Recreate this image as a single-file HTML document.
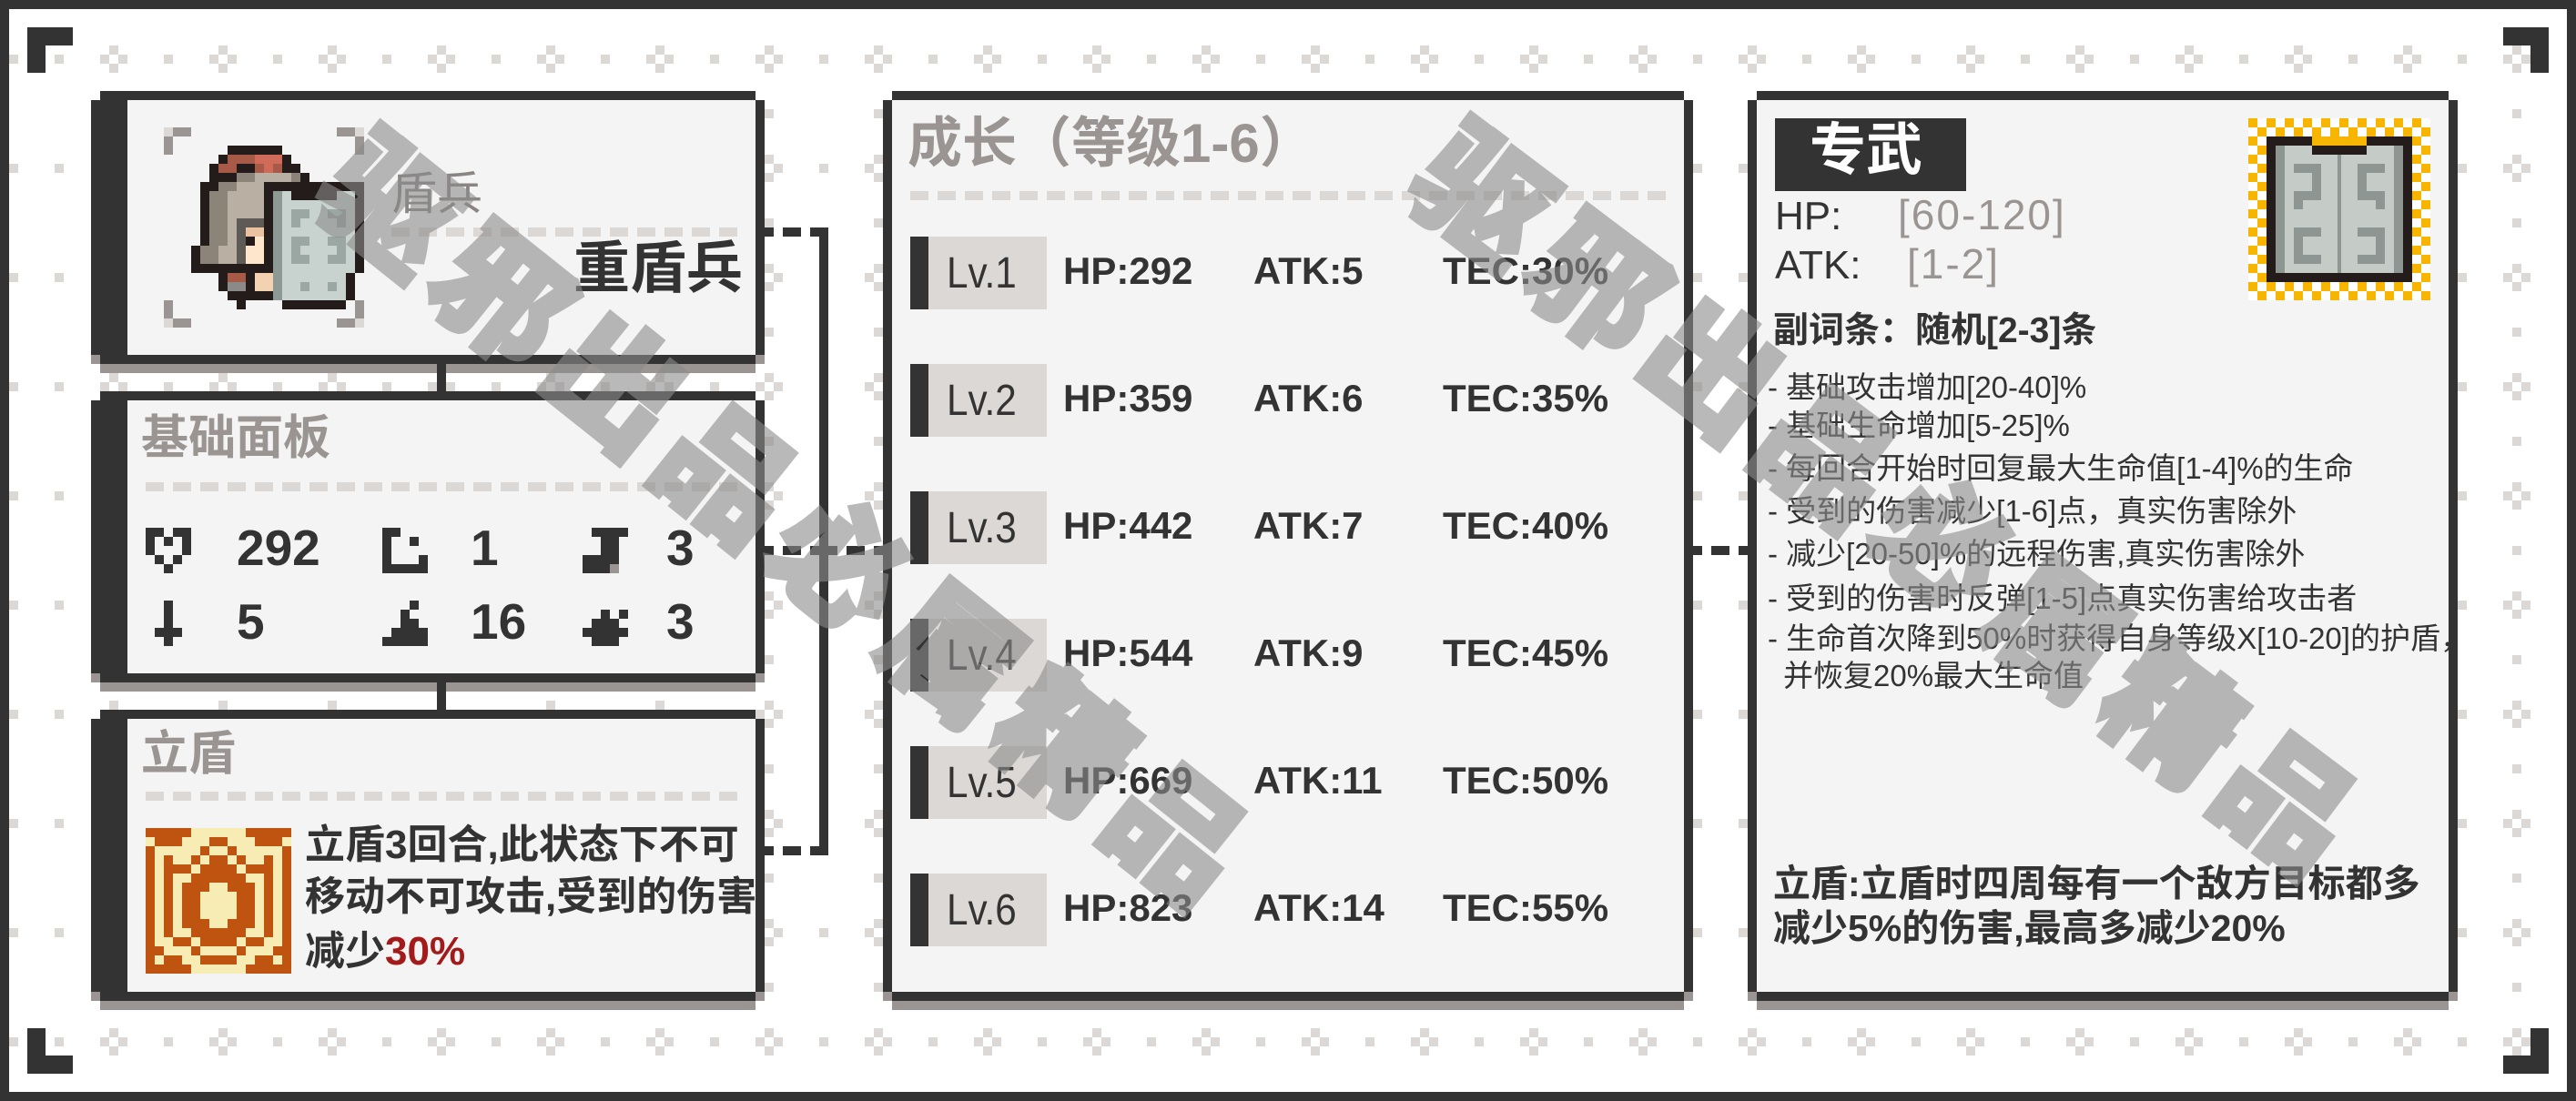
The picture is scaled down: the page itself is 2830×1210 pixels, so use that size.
<!DOCTYPE html>
<html><head><meta charset="utf-8">
<style>
html,body{margin:0;padding:0;background:#fff;}
body{width:2830px;height:1210px;position:relative;overflow:hidden;}
.t{position:absolute;line-height:1;white-space:nowrap;font-family:"Liberation Sans","Noto Sans CJK SC",sans-serif;color:#333;}
.b{font-weight:bold;}
.g{color:#9a9592;}
.wm{position:absolute;line-height:140px;height:140px;white-space:nowrap;font-family:"Noto Sans CJK SC",sans-serif;font-weight:900;font-size:144px;letter-spacing:14px;color:#8c8c8c;-webkit-text-stroke:5px #8c8c8c;opacity:0.6;transform-origin:0 70px;}
</style></head><body>
<svg width="2830" height="1210" style="position:absolute;left:0;top:0" xmlns="http://www.w3.org/2000/svg">
<defs>
<pattern id="dots" x="0" y="0" width="120" height="120" patternUnits="userSpaceOnUse">
<g fill="#dcd8d6">
<rect x="0" y="50" width="10" height="10"/><rect x="110" y="60" width="10" height="10"/><rect x="10" y="60" width="10" height="10"/><rect x="0" y="70" width="10" height="10"/>
<rect x="60" y="60" width="10" height="10"/><rect x="0" y="0" width="10" height="10"/>
</g>
</pattern>
<g id="half" fill="#bf5410">
<rect x="0" y="0" width="5" height="1"/>
<rect x="1" y="1" width="3" height="1"/><rect x="7" y="1" width="1" height="1"/>
<rect x="0" y="2" width="1" height="1"/><rect x="6" y="2" width="1" height="1"/>
<rect x="0" y="3" width="1" height="1"/><rect x="2" y="3" width="1" height="1"/><rect x="5" y="3" width="1" height="1"/><rect x="7" y="3" width="1" height="1"/>
<rect x="0" y="4" width="1" height="1"/><rect x="2" y="4" width="3" height="1"/><rect x="6" y="4" width="2" height="1"/>
<rect x="0" y="5" width="1" height="1"/><rect x="2" y="5" width="1" height="1"/><rect x="5" y="5" width="3" height="1"/>
<rect x="0" y="6" width="1" height="1"/><rect x="2" y="6" width="1" height="1"/><rect x="4" y="6" width="3" height="1"/>
<rect x="0" y="7" width="1" height="3"/><rect x="2" y="7" width="1" height="3"/><rect x="4" y="7" width="2" height="3"/>
<rect x="0" y="10" width="1" height="1"/><rect x="2" y="10" width="1" height="1"/><rect x="4" y="10" width="3" height="1"/>
<rect x="0" y="11" width="1" height="1"/><rect x="2" y="11" width="1" height="1"/><rect x="5" y="11" width="3" height="1"/>
<rect x="0" y="12" width="1" height="1"/><rect x="3" y="12" width="2" height="1"/><rect x="6" y="12" width="2" height="1"/>
<rect x="0" y="13" width="2" height="1"/><rect x="5" y="13" width="1" height="1"/>
<rect x="0" y="14" width="1" height="1"/><rect x="2" y="14" width="2" height="1"/><rect x="6" y="14" width="2" height="1"/>
<rect x="0" y="15" width="5" height="1"/>
</g>
</defs>
<rect x="0" y="0" width="2830" height="1210" fill="#fff"/>
<rect x="0" y="0" width="2830" height="1210" fill="url(#dots)"/>
<g fill="#333">
<rect x="0" y="0" width="2830" height="10"/><rect x="0" y="1200" width="2830" height="10"/>
<rect x="0" y="0" width="10" height="1210"/><rect x="2820" y="0" width="10" height="1210"/>
<rect x="30" y="30" width="50" height="20"/><rect x="30" y="30" width="20" height="50"/>
<rect x="2750" y="30" width="50" height="20"/><rect x="2780" y="30" width="20" height="50"/>
<rect x="30" y="1160" width="50" height="20"/><rect x="30" y="1130" width="20" height="50"/>
<rect x="2750" y="1160" width="50" height="20"/><rect x="2780" y="1130" width="20" height="50"/>
</g>
<g>
<rect x="140" y="110" width="690" height="280" fill="#f4f4f4"/>
<g fill="#333"><rect x="110" y="100" width="720" height="10"/><rect x="100" y="110" width="40" height="280"/><rect x="830" y="110" width="10" height="280"/><rect x="110" y="390" width="720" height="10"/></g>
<g fill="#9a9592"><rect x="100" y="390" width="10" height="10"/><rect x="830" y="390" width="10" height="10"/><rect x="110" y="400" width="720" height="10"/></g>
<rect x="140" y="440" width="690" height="300" fill="#f4f4f4"/>
<g fill="#333"><rect x="110" y="430" width="720" height="10"/><rect x="100" y="440" width="40" height="300"/><rect x="830" y="440" width="10" height="300"/><rect x="110" y="740" width="720" height="10"/></g>
<g fill="#9a9592"><rect x="100" y="740" width="10" height="10"/><rect x="830" y="740" width="10" height="10"/><rect x="110" y="750" width="720" height="10"/></g>
<rect x="140" y="790" width="690" height="300" fill="#f4f4f4"/>
<g fill="#333"><rect x="110" y="780" width="720" height="10"/><rect x="100" y="790" width="40" height="300"/><rect x="830" y="790" width="10" height="300"/><rect x="110" y="1090" width="720" height="10"/></g>
<g fill="#9a9592"><rect x="100" y="1090" width="10" height="10"/><rect x="830" y="1090" width="10" height="10"/><rect x="110" y="1100" width="720" height="10"/></g>
<rect x="980" y="110" width="870" height="980" fill="#f4f4f4"/>
<g fill="#333"><rect x="980" y="100" width="870" height="10"/><rect x="970" y="110" width="10" height="980"/><rect x="1850" y="110" width="10" height="980"/><rect x="980" y="1090" width="870" height="10"/></g>
<g fill="#9a9592"><rect x="970" y="1090" width="10" height="10"/><rect x="1850" y="1090" width="10" height="10"/><rect x="980" y="1100" width="870" height="10"/></g>
<rect x="1930" y="110" width="760" height="980" fill="#f4f4f4"/>
<g fill="#333"><rect x="1930" y="100" width="760" height="10"/><rect x="1920" y="110" width="10" height="980"/><rect x="2690" y="110" width="10" height="980"/><rect x="1930" y="1090" width="760" height="10"/></g>
<g fill="#9a9592"><rect x="1920" y="1090" width="10" height="10"/><rect x="2690" y="1090" width="10" height="10"/><rect x="1930" y="1100" width="760" height="10"/></g>
</g>
<g fill="#333">
<rect x="480" y="400" width="10" height="30"/><rect x="480" y="750" width="10" height="30"/>
<rect x="900" y="250" width="10" height="690"/>
<rect x="840" y="250" width="10" height="10"/><rect x="860" y="250" width="20" height="10"/><rect x="890" y="250" width="10" height="10"/>
<rect x="840" y="930" width="10" height="10"/><rect x="860" y="930" width="20" height="10"/><rect x="890" y="930" width="10" height="10"/>
<rect x="840" y="600" width="10" height="10"/><rect x="860" y="600" width="20" height="10"/><rect x="890" y="600" width="10" height="10"/>
<rect x="910" y="600" width="10" height="10"/><rect x="930" y="600" width="20" height="10"/><rect x="960" y="600" width="10" height="10"/>
<rect x="1860" y="600" width="10" height="10"/><rect x="1880" y="600" width="20" height="10"/><rect x="1910" y="600" width="10" height="10"/>
</g>
<g stroke="#dcd8d6" stroke-width="10" stroke-dasharray="20 10">
<line x1="430" y1="255" x2="815" y2="255"/>
<line x1="160" y1="535" x2="815" y2="535"/>
<line x1="160" y1="875" x2="815" y2="875"/>
<line x1="1000" y1="215" x2="1835" y2="215"/>
</g>
<g>
<rect x="1000" y="260" width="20" height="80" fill="#333"/><rect x="1020" y="260" width="130" height="80" fill="#dcd8d6"/>
<rect x="1000" y="400" width="20" height="80" fill="#333"/><rect x="1020" y="400" width="130" height="80" fill="#dcd8d6"/>
<rect x="1000" y="540" width="20" height="80" fill="#333"/><rect x="1020" y="540" width="130" height="80" fill="#dcd8d6"/>
<rect x="1000" y="680" width="20" height="80" fill="#333"/><rect x="1020" y="680" width="130" height="80" fill="#dcd8d6"/>
<rect x="1000" y="820" width="20" height="80" fill="#333"/><rect x="1020" y="820" width="130" height="80" fill="#dcd8d6"/>
<rect x="1000" y="960" width="20" height="80" fill="#333"/><rect x="1020" y="960" width="130" height="80" fill="#dcd8d6"/>
</g>
<g fill="#9a9592">
<rect x="190" y="140" width="20" height="10"/><rect x="180" y="150" width="10" height="20"/>
<rect x="370" y="140" width="20" height="10"/><rect x="390" y="150" width="10" height="20"/>
<rect x="180" y="330" width="10" height="20"/><rect x="190" y="350" width="20" height="10"/>
<rect x="390" y="330" width="10" height="20"/><rect x="370" y="350" width="20" height="10"/>
</g>
<g fill="#dcd8d6"><rect x="180" y="140" width="10" height="10"/><rect x="390" y="140" width="10" height="10"/><rect x="180" y="350" width="10" height="10"/><rect x="390" y="350" width="10" height="10"/></g>
<g transform="translate(170,130) scale(10)">
<g fill="#231c1a">
<rect x="8" y="3" width="6" height="1"/><rect x="7" y="4" width="8" height="1"/><rect x="6" y="5" width="10" height="1"/><rect x="6" y="6" width="11" height="1"/>
<rect x="5" y="7" width="8" height="1"/><rect x="5" y="8" width="8" height="6"/><rect x="4" y="14" width="9" height="3"/>
<rect x="7" y="17" width="7" height="2"/><rect x="8" y="19" width="6" height="1"/><rect x="9" y="20" width="1" height="1"/>
<rect x="12" y="7" width="11" height="10"/><rect x="12" y="17" width="10" height="3"/><rect x="14" y="20" width="7" height="1"/>
</g>
<g fill="#a85a48"><rect x="8" y="4" width="3" height="1"/><rect x="7" y="5" width="2" height="1"/><rect x="11" y="5" width="1" height="1"/><rect x="13" y="5" width="1" height="1"/><rect x="8" y="17" width="2" height="1"/></g>
<g fill="#cf6b58"><rect x="11" y="4" width="3" height="1"/><rect x="12" y="5" width="1" height="1"/></g>
<g fill="#8c8478"><rect x="9" y="6" width="2" height="1"/><rect x="15" y="6" width="1" height="1"/><rect x="7" y="7" width="2" height="1"/><rect x="6" y="8" width="2" height="6"/><rect x="5" y="14" width="2" height="2"/></g>
<g fill="#b9b0a3"><rect x="11" y="6" width="4" height="1"/><rect x="9" y="7" width="3" height="1"/><rect x="8" y="8" width="4" height="3"/><rect x="8" y="11" width="1" height="3"/><rect x="7" y="14" width="2" height="2"/></g>
<g fill="#5e5a56"><rect x="9" y="11" width="3" height="1"/><rect x="9" y="12" width="1" height="4"/></g>
<rect x="10" y="12" width="2" height="4" fill="#fde6cc"/><rect x="10" y="12" width="2" height="1" fill="#e9c29f"/>
<rect x="10" y="13" width="1" height="1" fill="#231c1a"/>
<rect x="8" y="18" width="2" height="1" fill="#8c8a88"/>
<rect x="11" y="17" width="2" height="2" fill="#f2d2b0"/>
<rect x="13" y="8" width="9" height="9" fill="#c8d2cf"/><rect x="13" y="17" width="8" height="3" fill="#c8d2cf"/>
<rect x="13" y="8" width="1" height="12" fill="#8c9995"/>
<rect x="15" y="8" width="5" height="1" fill="#231c1a"/>
<g fill="#9aa7a3">
<rect x="15" y="10" width="2" height="1"/><rect x="15" y="11" width="1" height="1"/><rect x="19" y="10" width="2" height="1"/><rect x="20" y="11" width="1" height="1"/>
<rect x="15" y="13" width="2" height="1"/><rect x="15" y="14" width="1" height="1"/><rect x="15" y="15" width="2" height="1"/>
<rect x="19" y="13" width="2" height="1"/><rect x="20" y="14" width="1" height="1"/><rect x="19" y="15" width="2" height="1"/>
<rect x="16" y="18" width="1" height="1"/><rect x="19" y="18" width="1" height="1"/>
</g>
</g>
<g fill="#333">
<g transform="translate(160,580) scale(10)">
<rect x="0" y="0" width="2" height="1"/><rect x="3" y="0" width="2" height="1"/>
<rect x="0" y="1" width="1" height="2"/><rect x="2" y="1" width="1" height="1"/><rect x="4" y="1" width="1" height="2"/>
<rect x="1" y="3" width="1" height="1"/><rect x="3" y="3" width="1" height="1"/><rect x="2" y="4" width="1" height="1"/>
</g>
<g transform="translate(420,580) scale(10)">
<rect x="0" y="0" width="2" height="1"/><rect x="0" y="1" width="1" height="3"/><rect x="3" y="1" width="1" height="1"/>
<rect x="4" y="3" width="1" height="1"/><rect x="0" y="4" width="5" height="1"/>
</g>
<g transform="translate(640,580) scale(10)">
<rect x="1" y="0" width="4" height="1"/><rect x="2" y="1" width="2" height="2"/><rect x="0" y="3" width="4" height="1"/><rect x="0" y="4" width="3" height="1"/>
<rect x="3" y="4" width="1" height="1" fill="#9a9592"/>
</g>
<g transform="translate(160,660) scale(10)">
<rect x="2" y="0" width="1" height="5"/><rect x="1" y="3" width="3" height="1"/>
</g>
<g transform="translate(420,660) scale(10)">
<rect x="3" y="0" width="1" height="1"/><rect x="2" y="1" width="1" height="1"/><rect x="2" y="2" width="2" height="1"/><rect x="1" y="3" width="4" height="1"/><rect x="0" y="4" width="5" height="1"/>
</g>
<g transform="translate(640,660) scale(10)">
<rect x="2" y="1" width="1" height="1"/><rect x="4" y="1" width="1" height="1"/><rect x="1" y="2" width="3" height="1"/><rect x="0" y="3" width="5" height="1"/><rect x="1" y="4" width="3" height="1"/>
</g>
</g>
<rect x="160" y="910" width="160" height="160" fill="#f7edb4"/>
<g transform="translate(160,910) scale(10)">
<use href="#half"/>
<use href="#half" transform="translate(16,0) scale(-1,1)"/>
</g>
<rect x="2470" y="130" width="200" height="200" fill="#fff"/>
<g fill="#f7b500" transform="translate(2470,130) scale(10)">
<rect x="0" y="0" width="1" height="1"/><rect x="2" y="0" width="1" height="1"/><rect x="4" y="0" width="1" height="1"/><rect x="6" y="0" width="1" height="1"/><rect x="8" y="0" width="1" height="1"/><rect x="10" y="0" width="1" height="1"/><rect x="12" y="0" width="1" height="1"/><rect x="14" y="0" width="1" height="1"/><rect x="16" y="0" width="1" height="1"/><rect x="18" y="0" width="1" height="1"/>
<rect x="1" y="1" width="1" height="1"/><rect x="3" y="1" width="1" height="1"/><rect x="5" y="1" width="1" height="1"/><rect x="7" y="1" width="1" height="1"/><rect x="9" y="1" width="1" height="1"/><rect x="11" y="1" width="1" height="1"/><rect x="13" y="1" width="1" height="1"/><rect x="15" y="1" width="1" height="1"/><rect x="17" y="1" width="1" height="1"/><rect x="19" y="1" width="1" height="1"/>
<rect x="0" y="18" width="1" height="1"/><rect x="2" y="18" width="1" height="1"/><rect x="4" y="18" width="1" height="1"/><rect x="6" y="18" width="1" height="1"/><rect x="8" y="18" width="1" height="1"/><rect x="10" y="18" width="1" height="1"/><rect x="12" y="18" width="1" height="1"/><rect x="14" y="18" width="1" height="1"/><rect x="16" y="18" width="1" height="1"/><rect x="18" y="18" width="1" height="1"/>
<rect x="1" y="19" width="1" height="1"/><rect x="3" y="19" width="1" height="1"/><rect x="5" y="19" width="1" height="1"/><rect x="7" y="19" width="1" height="1"/><rect x="9" y="19" width="1" height="1"/><rect x="11" y="19" width="1" height="1"/><rect x="13" y="19" width="1" height="1"/><rect x="15" y="19" width="1" height="1"/><rect x="17" y="19" width="1" height="1"/><rect x="19" y="19" width="1" height="1"/>
<rect x="0" y="2" width="1" height="1"/><rect x="0" y="4" width="1" height="1"/><rect x="0" y="6" width="1" height="1"/><rect x="0" y="8" width="1" height="1"/><rect x="0" y="10" width="1" height="1"/><rect x="0" y="12" width="1" height="1"/><rect x="0" y="14" width="1" height="1"/><rect x="0" y="16" width="1" height="1"/>
<rect x="1" y="3" width="1" height="1"/><rect x="1" y="5" width="1" height="1"/><rect x="1" y="7" width="1" height="1"/><rect x="1" y="9" width="1" height="1"/><rect x="1" y="11" width="1" height="1"/><rect x="1" y="13" width="1" height="1"/><rect x="1" y="15" width="1" height="1"/><rect x="1" y="17" width="1" height="1"/>
<rect x="18" y="2" width="1" height="1"/><rect x="18" y="4" width="1" height="1"/><rect x="18" y="6" width="1" height="1"/><rect x="18" y="8" width="1" height="1"/><rect x="18" y="10" width="1" height="1"/><rect x="18" y="12" width="1" height="1"/><rect x="18" y="14" width="1" height="1"/><rect x="18" y="16" width="1" height="1"/>
<rect x="19" y="3" width="1" height="1"/><rect x="19" y="5" width="1" height="1"/><rect x="19" y="7" width="1" height="1"/><rect x="19" y="9" width="1" height="1"/><rect x="19" y="11" width="1" height="1"/><rect x="19" y="13" width="1" height="1"/><rect x="19" y="15" width="1" height="1"/><rect x="19" y="17" width="1" height="1"/>
<rect x="2" y="2" width="16" height="16"/>
</g>
<rect x="2490" y="150" width="160" height="160" fill="#231c1a"/>
<rect x="2540" y="150" width="60" height="10" fill="#f7b500"/>
<rect x="2500" y="160" width="140" height="140" fill="#c5ccc8"/>
<rect x="2540" y="160" width="60" height="10" fill="#231c1a"/>
<g fill="#8d9692">
<rect x="2500" y="160" width="10" height="140"/><rect x="2630" y="160" width="10" height="140"/><rect x="2568" y="170" width="4" height="130"/>
<rect x="2520" y="180" width="30" height="10"/><rect x="2540" y="190" width="10" height="20"/><rect x="2520" y="210" width="30" height="10"/><rect x="2520" y="220" width="10" height="10"/>
<rect x="2590" y="180" width="30" height="10"/><rect x="2590" y="190" width="10" height="20"/><rect x="2590" y="210" width="30" height="10"/><rect x="2610" y="220" width="10" height="10"/>
<rect x="2520" y="250" width="30" height="10"/><rect x="2520" y="260" width="10" height="20"/><rect x="2520" y="280" width="30" height="10"/>
<rect x="2590" y="250" width="30" height="10"/><rect x="2610" y="260" width="10" height="20"/><rect x="2590" y="280" width="30" height="10"/>
</g>
<rect x="1950" y="130" width="210" height="80" fill="#333"/>
</svg>

<div class="t" style="left:430px;top:188px;font-size:50px;color:#8a8582;">盾兵</div>
<div class="t b" style="left:630px;top:265px;font-size:62px;">重盾兵</div>
<div class="t b g" style="left:155px;top:456px;font-size:52px;">基础面板</div>
<div class="t b" style="left:260px;top:575px;font-size:55px;">292</div>
<div class="t b" style="left:517px;top:575px;font-size:55px;">1</div>
<div class="t b" style="left:732px;top:575px;font-size:55px;">3</div>
<div class="t b" style="left:260px;top:656px;font-size:55px;">5</div>
<div class="t b" style="left:517px;top:656px;font-size:55px;">16</div>
<div class="t b" style="left:732px;top:656px;font-size:55px;">3</div>
<div class="t b g" style="left:155px;top:803px;font-size:52px;">立盾</div>
<div class="t b" style="left:335px;top:907px;font-size:44px;">立盾3回合,此状态下不可</div>
<div class="t b" style="left:335px;top:964px;font-size:44px;">移动不可攻击,受到的伤害</div>
<div class="t b" style="left:335px;top:1024px;font-size:44px;">减少<span style="color:#a31a1a">30%</span></div>
<div class="t b g" style="left:997px;top:128px;font-size:60px;">成长（等级1-6）</div>

<div class="t" style="left:1040px;top:277px;font-size:48px;transform:scaleX(.88);transform-origin:0 0;">Lv.1</div>
<div class="t b" style="left:1168px;top:277px;font-size:42px;">HP:292</div>
<div class="t b" style="left:1377px;top:277px;font-size:42px;">ATK:5</div>
<div class="t b" style="left:1585px;top:277px;font-size:42px;">TEC:30%</div>
<div class="t" style="left:1040px;top:417px;font-size:48px;transform:scaleX(.88);transform-origin:0 0;">Lv.2</div>
<div class="t b" style="left:1168px;top:417px;font-size:42px;">HP:359</div>
<div class="t b" style="left:1377px;top:417px;font-size:42px;">ATK:6</div>
<div class="t b" style="left:1585px;top:417px;font-size:42px;">TEC:35%</div>
<div class="t" style="left:1040px;top:557px;font-size:48px;transform:scaleX(.88);transform-origin:0 0;">Lv.3</div>
<div class="t b" style="left:1168px;top:557px;font-size:42px;">HP:442</div>
<div class="t b" style="left:1377px;top:557px;font-size:42px;">ATK:7</div>
<div class="t b" style="left:1585px;top:557px;font-size:42px;">TEC:40%</div>
<div class="t" style="left:1040px;top:697px;font-size:48px;transform:scaleX(.88);transform-origin:0 0;">Lv.4</div>
<div class="t b" style="left:1168px;top:697px;font-size:42px;">HP:544</div>
<div class="t b" style="left:1377px;top:697px;font-size:42px;">ATK:9</div>
<div class="t b" style="left:1585px;top:697px;font-size:42px;">TEC:45%</div>
<div class="t" style="left:1040px;top:837px;font-size:48px;transform:scaleX(.88);transform-origin:0 0;">Lv.5</div>
<div class="t b" style="left:1168px;top:837px;font-size:42px;">HP:669</div>
<div class="t b" style="left:1377px;top:837px;font-size:42px;">ATK:11</div>
<div class="t b" style="left:1585px;top:837px;font-size:42px;">TEC:50%</div>
<div class="t" style="left:1040px;top:977px;font-size:48px;transform:scaleX(.88);transform-origin:0 0;">Lv.6</div>
<div class="t b" style="left:1168px;top:977px;font-size:42px;">HP:823</div>
<div class="t b" style="left:1377px;top:977px;font-size:42px;">ATK:14</div>
<div class="t b" style="left:1585px;top:977px;font-size:42px;">TEC:55%</div>

<div class="t b" style="left:1988px;top:135px;font-size:62px;color:#fff;">专武</div>
<div class="t" style="left:1950px;top:216px;font-size:44px;">HP:</div>
<div class="t g" style="left:2085px;top:213px;font-size:46px;letter-spacing:2px;">[60-120]</div>
<div class="t" style="left:1950px;top:270px;font-size:44px;">ATK:</div>
<div class="t g" style="left:2095px;top:267px;font-size:46px;letter-spacing:2px;">[1-2]</div>
<div class="t b" style="left:1948px;top:344px;font-size:39px;">副词条：随机[2-3]条</div>
<div class="t" style="left:1942px;top:409px;font-size:33px;">- 基础攻击增加[20-40]%</div>
<div class="t" style="left:1942px;top:451px;font-size:33px;">- 基础生命增加[5-25]%</div>
<div class="t" style="left:1942px;top:498px;font-size:33px;">- 每回合开始时回复最大生命值[1-4]%的生命</div>
<div class="t" style="left:1942px;top:545px;font-size:33px;">- 受到的伤害减少[1-6]点，真实伤害除外</div>
<div class="t" style="left:1942px;top:592px;font-size:33px;">- 减少[20-50]%的远程伤害,真实伤害除外</div>
<div class="t" style="left:1942px;top:641px;font-size:33px;">- 受到的伤害时反弹[1-5]点真实伤害给攻击者</div>
<div class="t" style="left:1942px;top:685px;font-size:33px;">- 生命首次降到50%时获得自身等级X[10-20]的护盾，</div>
<div class="t" style="left:1959px;top:726px;font-size:33px;">并恢复20%最大生命值</div>
<div class="t b" style="left:1948px;top:951px;font-size:41px;">立盾:立盾时四周每有一个敌方目标都多</div>
<div class="t b" style="left:1948px;top:1000px;font-size:41px;">减少5%的伤害,最高多减少20%</div>

<div class="wm" style="left:378px;top:103px;transform:rotate(38.6deg);">驱邪出品必属精品</div>
<div class="wm" style="left:1577px;top:95px;transform:rotate(37deg);">驱邪出品必属精品</div>
</body></html>
